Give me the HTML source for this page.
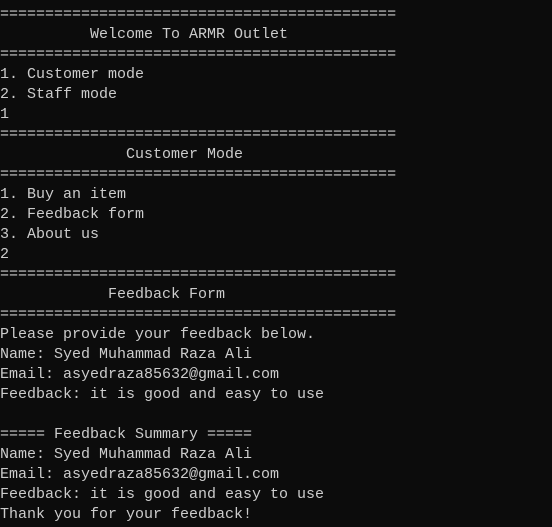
<!DOCTYPE html>
<html><head><style>
html,body{margin:0;padding:0;background:#0c0c0c;width:552px;height:527px;overflow:hidden}
pre{margin:0;position:absolute;left:0;top:5px;font-family:"Liberation Mono",monospace;font-size:15px;line-height:20px;color:#cccccc}
</style></head><body><pre>============================================
          Welcome To ARMR Outlet
============================================
1. Customer mode
2. Staff mode
1
============================================
              Customer Mode
============================================
1. Buy an item
2. Feedback form
3. About us
2
============================================
            Feedback Form
============================================
Please provide your feedback below.
Name: Syed Muhammad Raza Ali
Email: asyedraza85632@gmail.com
Feedback: it is good and easy to use

===== Feedback Summary =====
Name: Syed Muhammad Raza Ali
Email: asyedraza85632@gmail.com
Feedback: it is good and easy to use
Thank you for your feedback!</pre></body></html>
